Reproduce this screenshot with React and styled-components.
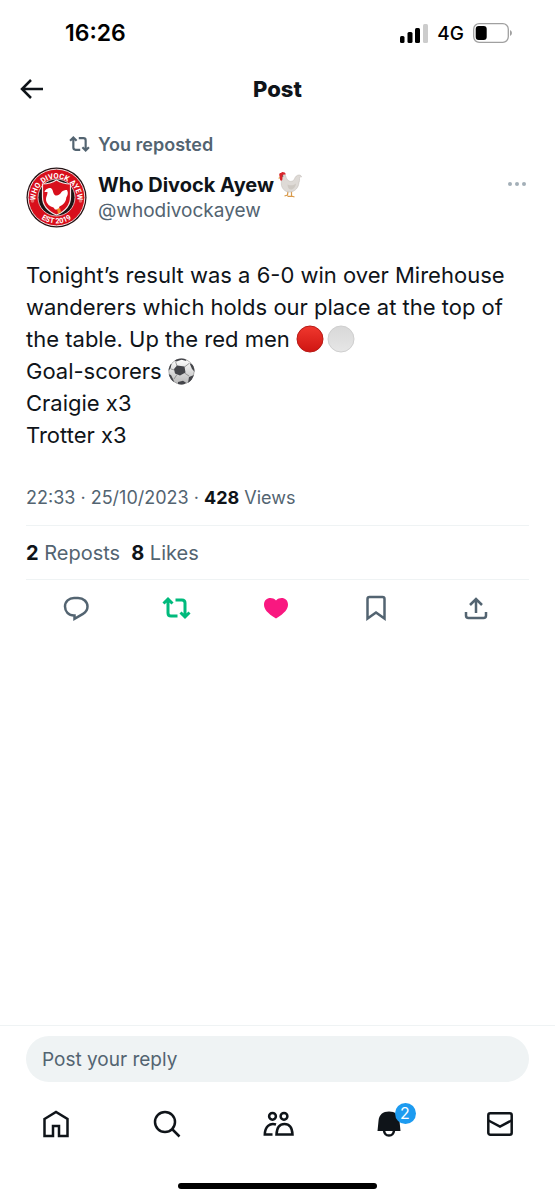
import styled, { createGlobalStyle } from "styled-components";

const GlobalStyle = createGlobalStyle`
  * {
    box-sizing: border-box;
  }
  body {
    margin: 0;
    background: #ffffff;
    color: #0f1419;
    font-family: Inter, "Liberation Sans", sans-serif;
  }
  button {
    border: 0;
    padding: 0;
    background: none;
    color: inherit;
    font: inherit;
    cursor: pointer;
  }
  svg {
    display: block;
  }
`;

const Screen = styled.div`
  min-height: 100vh;
  display: flex;
  flex-direction: column;
`;

const StatusBar = styled.div`
  height: 66px;
  padding: 0 43px 0 65px;
  display: flex;
  align-items: center;
  justify-content: space-between;
  color: #000000;
`;

const Time = styled.span`
  font-size: 23px;
  font-weight: 600;
`;

const StatusIcons = styled.div`
  display: flex;
  align-items: center;
  gap: 9px;
  font-size: 19px;
  font-weight: 500;
`;

const Header = styled.header`
  height: 46px;
  padding: 0 20px;
  display: grid;
  grid-template-columns: 24px 1fr 24px;
  align-items: center;

  h1 {
    margin: 0;
    font-size: 22px;
    font-weight: 800;
    text-align: center;
  }
`;

const Post = styled.article`
  flex: 1;
  padding: 19px 26px 0;
`;

const Reposted = styled.div`
  height: 26px;
  padding-left: 43px;
  display: flex;
  align-items: center;
  gap: 8px;
  color: #536471;
  font-size: 18px;
  font-weight: 600;
`;

const Author = styled.div`
  margin-top: 10px;
  display: flex;
  align-items: flex-start;
  gap: 11px;
`;

const Names = styled.div`
  flex: 1;
  padding-top: 5px;
  line-height: 26px;
`;

const Name = styled.div`
  height: 26px;
  display: flex;
  align-items: center;
  gap: 4px;
  font-size: 20px;
  font-weight: 700;
`;

const Handle = styled.div`
  color: #536471;
  font-size: 19px;
`;

const More = styled.button`
  margin: 15px 3px 0 0;
`;

const Body = styled.p`
  margin: 31px 0 0;
  font-size: 22px;
  line-height: 32px;

  svg {
    display: inline-block;
    margin-right: 3px;
    vertical-align: -6px;
  }
`;

const Meta = styled.div`
  margin-top: ${(props) => props.$top || 0}px;
  height: ${(props) => props.$height}px;
  padding-bottom: ${(props) => props.$bottom || 0}px;
  display: flex;
  align-items: center;
  gap: 11px;
  border-bottom: 1px solid #eff3f4;
  color: #536471;
  font-size: ${(props) => props.$size}px;

  b {
    color: #0f1419;
    font-weight: 700;
  }
`;

const Actions = styled.div`
  height: 56px;
  padding-right: 3px;
  display: grid;
  grid-template-columns: repeat(5, 1fr);
  align-items: center;
  justify-items: center;
  color: #536471;
`;

const Footer = styled.footer`
  border-top: 1px solid #eff3f4;
  padding-top: 10px;
`;

const Reply = styled.input`
  display: block;
  width: calc(100% - 52px);
  height: 46px;
  margin: 0 26px;
  padding: 0 16px;
  border: 0;
  border-radius: 23px;
  background: #eff3f4;
  font-family: inherit;
  font-size: 19px;

  &::placeholder {
    color: #536471;
    opacity: 1;
  }
`;

const Tabs = styled.nav`
  height: 84px;
  display: grid;
  grid-template-columns: repeat(5, 1fr);
  align-items: center;
  justify-items: center;

  a {
    position: relative;
    color: #0f1419;
  }
`;

const Badge = styled.span`
  position: absolute;
  top: -6px;
  right: -14px;
  width: 21px;
  height: 21px;
  border-radius: 50%;
  background: #1d9bf0;
  color: #ffffff;
  font-size: 16px;
  line-height: 21px;
  text-align: center;
`;

const HomeBar = styled.div`
  width: 36%;
  height: 6px;
  margin: 17px auto 11px;
  border-radius: 3px;
  background: #000000;
`;

const Icon = ({ w = 30, h = 30, stroke = 2.5, children, ...rest }) => (
  <svg
    width={w}
    height={h}
    viewBox={`0 0 ${w} ${h}`}
    fill="none"
    stroke="currentColor"
    strokeWidth={stroke}
    aria-hidden="true"
    {...rest}
  >
    {children}
  </svg>
);

const RepostPaths = () => (
  <>
    <path d="M1.5 7.5 6 3l4.5 4.5M6 3.5V17q0 3 3 3h6.5" />
    <path d="M13.5 4H20q3 0 3 3v13M18.5 16.5 23 21l4.5-4.5" />
  </>
);

const Signal = () => (
  <svg width="28" height="19" viewBox="0 0 28 19" aria-hidden="true">
    <rect x="0" y="12" width="4.5" height="7" rx="1.5" />
    <rect x="7.5" y="8" width="5" height="11" rx="1.5" />
    <rect x="15" y="4" width="5" height="15" rx="1.5" />
    <rect x="23" y="0" width="5" height="19" rx="1.5" fill="#cccccc" />
  </svg>
);

const Battery = () => (
  <svg width="39" height="20" viewBox="0 0 39 20" aria-hidden="true">
    <rect x="0.7" y="0.7" width="34.6" height="18.6" rx="5.5" fill="none" stroke="#a0a0a0" strokeWidth="1.3" />
    <rect x="2.7" y="3" width="11" height="14" rx="3" />
    <path d="M37 7q2 1 2 3t-2 3z" fill="#a0a0a0" />
  </svg>
);

const Crest = () => (
  <svg width="61" height="61" viewBox="0 0 61 61" role="img" aria-label="Who Divock Ayew crest">
    <defs>
      <path id="crest-top" d="M9.5 32.5a21 21 0 1 1 42 0" />
      <path id="crest-bottom" d="M4.5 30.5a26 26 0 0 0 52 0" />
    </defs>
    <circle cx="30.5" cy="30.5" r="30" fill="#251416" />
    <circle cx="30.5" cy="30.5" r="28.3" fill="#d80f1c" stroke="#f3dada" strokeWidth="1" />
    <circle cx="30.5" cy="30.5" r="18.5" fill="#1c1415" stroke="#f3dada" strokeWidth="0.8" />
    <path
      d="M30.5 13q6 4 14 4v13q0 12-14 18-14-6-14-18V17q8 0 14-4z"
      fill="#d80f1c"
      stroke="#f6e6e6"
      strokeWidth="1.2"
    />
    <path
      d="M22 21.5c-2 .5-3.500 2-3.500 3.500h3c.3 3-2 5-1.500 8 .6 4 4 6.500 7.500 7.500l1.500 2h3.500l1-3c4-1.500 6.500-5 6.800-9 1.500-2 2.200-5 .7-7.500-2 0-4 .5-5.500 2-1.500 2.500-3.500 4-6 3.500-2-1-2.500-4-3-5.500-1-2-2.500-2.500-4.500-1.500z"
      fill="#ffffff"
    />
    <path d="M31 42l1 4.500 3-1-1-4.500z" fill="#f28c28" />
    <circle cx="6.5" cy="34" r="1.8" fill="#e86a6a" />
    <circle cx="54.5" cy="34" r="1.8" fill="#e86a6a" />
    <g fill="#ffffff" fontFamily="Roboto, sans-serif" fontWeight="700" fontSize="7.5" textAnchor="middle">
      <text>
        <textPath href="#crest-top" startOffset="50%">WHO DIVOCK AYEW</textPath>
      </text>
      <text>
        <textPath href="#crest-bottom" startOffset="50%">EST 2019</textPath>
      </text>
    </g>
  </svg>
);

const Rooster = () => (
  <svg width="24" height="26" viewBox="0 0 24 26" role="img" aria-label="rooster">
    <path d="M10 19l-.5 4-3 1M13.500 19v5.300h-4M13.500 24l3 1" fill="none" stroke="#d99a4a" strokeWidth="1.2" />
    <path
      d="M3 3c2-1.500 4-1 4.700 1 .6 2 1.300 4 3.300 5 2.500 1 4.500 0 5.500-2 .7-2.500 2.500-4 4.500-4 1.500 0 2.500.8 2.500 2-1-.6-1.800 0-2 1.500.3 1.500 0 2.500-.5 4-.5 5-3.500 8.500-8 9.500-4 .6-7.500-1.500-9-5-.8-2-.8-4-.5-6.500.2-2-.5-3.500-.5-5.500z"
      fill="#dedad6"
      stroke="#bdb7b0"
      strokeWidth="0.5"
    />
    <path d="M9.500 12.500c3 1.500 6 1 8.500-1-.5 3.500-2.500 6-5 6-2 0-3.500-2-3.500-5z" fill="#cec9c3" />
    <path d="M1.500 4C.8 2 1.500.8 3 1c.8-1 2-1.200 2.800-.4 1.200-.3 2 .6 1.700 2.200C6 2 4.800 2.500 4.600 4l-.3 4c-1 1.300-2.300.8-2.300-1z" fill="#d8262c" />
    <path d="M2 4.500 0 6.200l2 .6z" fill="#e0a050" />
    <circle cx="4.8" cy="4" r="0.6" fill="#222222" />
  </svg>
);

const Ball = ({ id, label, from, to, rim }) => (
  <svg width="28" height="28" viewBox="0 0 28 28" role="img" aria-label={label}>
    <defs>
      <linearGradient id={id} x1="0" y1="0" x2="0" y2="1">
        <stop offset="0" stopColor={from} />
        <stop offset="1" stopColor={to} />
      </linearGradient>
    </defs>
    <circle cx="14" cy="14" r="13" fill={`url(#${id})`} stroke={rim} />
  </svg>
);

const Football = () => (
  <svg width="27" height="27" viewBox="0 0 27 27" role="img" aria-label="football">
    <defs>
      <linearGradient id="football" x1="0" y1="0" x2="0" y2="1">
        <stop offset="0" stopColor="#ffffff" />
        <stop offset="1" stopColor="#b8b8b8" />
      </linearGradient>
      <clipPath id="football-edge">
        <circle cx="13.5" cy="13.5" r="13" />
      </clipPath>
    </defs>
    <circle cx="13.5" cy="13.5" r="12.7" fill="url(#football)" stroke="#8a8a8a" strokeWidth="0.6" />
    <g clipPath="url(#football-edge)">
      <path
        d="M9 8 7.500 3.500M16.500 9l4.500-3.500M16.500 15l4.500 3M9 16.500l-3 4.500M6.500 12 3 11"
        fill="none"
        stroke="#777777"
        strokeWidth="0.7"
      />
      <path
        d="M9 7.500l7.500 1 1 6L12 17.500l-5-2-1-4.500zM7 0h10l1.500 3-5-1.200-5 1.700-2-1zM21.500 5l5.500 3v6l-3-3zM26 17l-3 7-3 1 1-6zM10 24l5-1.200 3 2L14 28l-4-1zM0 16l3 1 2.500 5 .5 3-5-4zM0 6h3.500L2.500 10.500 0 13z"
        fill="#44454a"
      />
    </g>
  </svg>
);

const Home = () => (
  <Icon>
    <path d="M3.5 10 15 3l11.5 7v17H18V17h-6v10H3.5z" />
  </Icon>
);

const Search = () => (
  <Icon>
    <circle cx="13" cy="13" r="10" />
    <path d="M20 20l7.5 7.5" />
  </Icon>
);

const People = () => (
  <Icon w={32}>
    <circle cx="10.5" cy="7.3" r="3.4" />
    <circle cx="22" cy="7.3" r="3.4" />
    <path d="M14 15.500C7.500 13.500 3 18 2.800 25.500H10.500M14.500 25.500c.3-7 3.500-10.500 8-10.500s7.700 3.500 8 10.500z" />
  </Icon>
);

const Bell = () => (
  <Icon w={26}>
    <path
      d="M1.500 22 2.500 12C3 5.500 7 2.500 13 2.500S23 5.500 23.500 12l1 10z"
      fill="currentColor"
      stroke="none"
    />
    <path d="M8 21.500q.5 5 5 5t5-5" />
  </Icon>
);

const Mail = () => (
  <Icon>
    <rect x="3.3" y="4.3" width="23.4" height="21.4" rx="2" />
    <path d="M3.5 11.500l11.500 6 11.500-6" />
  </Icon>
);

const tabs = [
  { name: "Home", icon: <Home /> },
  { name: "Search", icon: <Search /> },
  { name: "Communities", icon: <People /> },
  { name: "Notifications", icon: <Bell />, count: 2 },
  { name: "Messages", icon: <Mail /> },
];

function App() {
  return (
    <Screen>
      <GlobalStyle />
      <StatusBar>
        <Time>16:26</Time>
        <StatusIcons>
          <Signal />
          4G
          <Battery />
        </StatusIcons>
      </StatusBar>

      <Header>
        <button aria-label="Back">
          <Icon w={24} h={22}>
            <path d="M11 2 2 11l9 9M2 11h21" />
          </Icon>
        </button>
        <h1>Post</h1>
      </Header>

      <Post>
        <Reposted>
          <Icon w={21} h={18} viewBox="0 0 29 24" stroke={3}>
            <RepostPaths />
          </Icon>
          You reposted
        </Reposted>
        <Author>
          <Crest />
          <Names>
            <Name>
              Who Divock Ayew <Rooster />
            </Name>
            <Handle>@whodivockayew</Handle>
          </Names>
          <More aria-label="More">
            <Icon w={18} h={4} stroke={0}>
              <g fill="#a3afb8">
                <circle cx="2" cy="2" r="2" />
                <circle cx="9" cy="2" r="2" />
                <circle cx="16" cy="2" r="2" />
              </g>
            </Icon>
          </More>
        </Author>

        <Body>
          Tonight’s result was a 6-0 win over Mirehouse
          <br />
          wanderers which holds our place at the top of
          <br />
          the table. Up the red men{" "}
          <Ball id="red" label="red circle" from="#f0382e" to="#cf1512" rim="#b81a16" />
          <Ball id="white" label="white circle" from="#d8d8d8" to="#e6e6e6" rim="#cfcfcf" />
          <br />
          Goal-scorers <Football />
          <br />
          Craigie x3
          <br />
          Trotter x3
        </Body>

        <Meta $top={32} $height={43} $bottom={14} $size={18}>
          <span>22:33 · 25/10/2023 · <b>428</b> Views</span>
        </Meta>
        <Meta $height={54} $size={20}>
          <span><b>2</b> Reposts</span>
          <span><b>8</b> Likes</span>
        </Meta>

        <Actions>
          <button aria-label="Reply">
            <Icon w={28} h={26}>
              <path d="M12.500 20.500H12C6.500 20.500 3 16.500 3 11.500S7 3 12 3h4c5.500 0 9.500 3.700 9.500 8.500 0 3.300-1.800 5.800-4.500 7.300l-8.500 5z" />
            </Icon>
          </button>
          <button aria-label="Undo repost">
            <Icon w={29} h={24} stroke={3} color="#00ba7c">
              <RepostPaths />
            </Icon>
          </button>
          <button aria-label="Unlike">
            <Icon w={26} h={24} color="#f91880">
              <path
                d="M13 22.500C4 17 1 13 1 8.500 1 2 8.500 0 13 4.500 17.500 0 25 2 25 8.500 25 13 22 17 13 22.500z"
                fill="currentColor"
                stroke="none"
              />
            </Icon>
          </button>
          <button aria-label="Bookmark">
            <Icon w={22} h={26}>
              <path d="M2.500 23.500V4q0-2 2-2h13q2 0 2 2v19.500L11 17.500z" />
            </Icon>
          </button>
          <button aria-label="Share">
            <Icon w={24} h={24}>
              <path d="M12 17V3M6 9l6-6 6 6M2 16v3.500Q2 22 4.500 22h15q2.500 0 2.500-2.500V16" />
            </Icon>
          </button>
        </Actions>
      </Post>

      <Footer>
        <Reply type="text" placeholder="Post your reply" aria-label="Post your reply" />
        <Tabs>
          {tabs.map((tab) => (
            <a key={tab.name} href={`#${tab.name.toLowerCase()}`} aria-label={tab.name}>
              {tab.icon}
              {tab.count && <Badge>{tab.count}</Badge>}
            </a>
          ))}
        </Tabs>
        <HomeBar />
      </Footer>
    </Screen>
  );
}

export default App;
